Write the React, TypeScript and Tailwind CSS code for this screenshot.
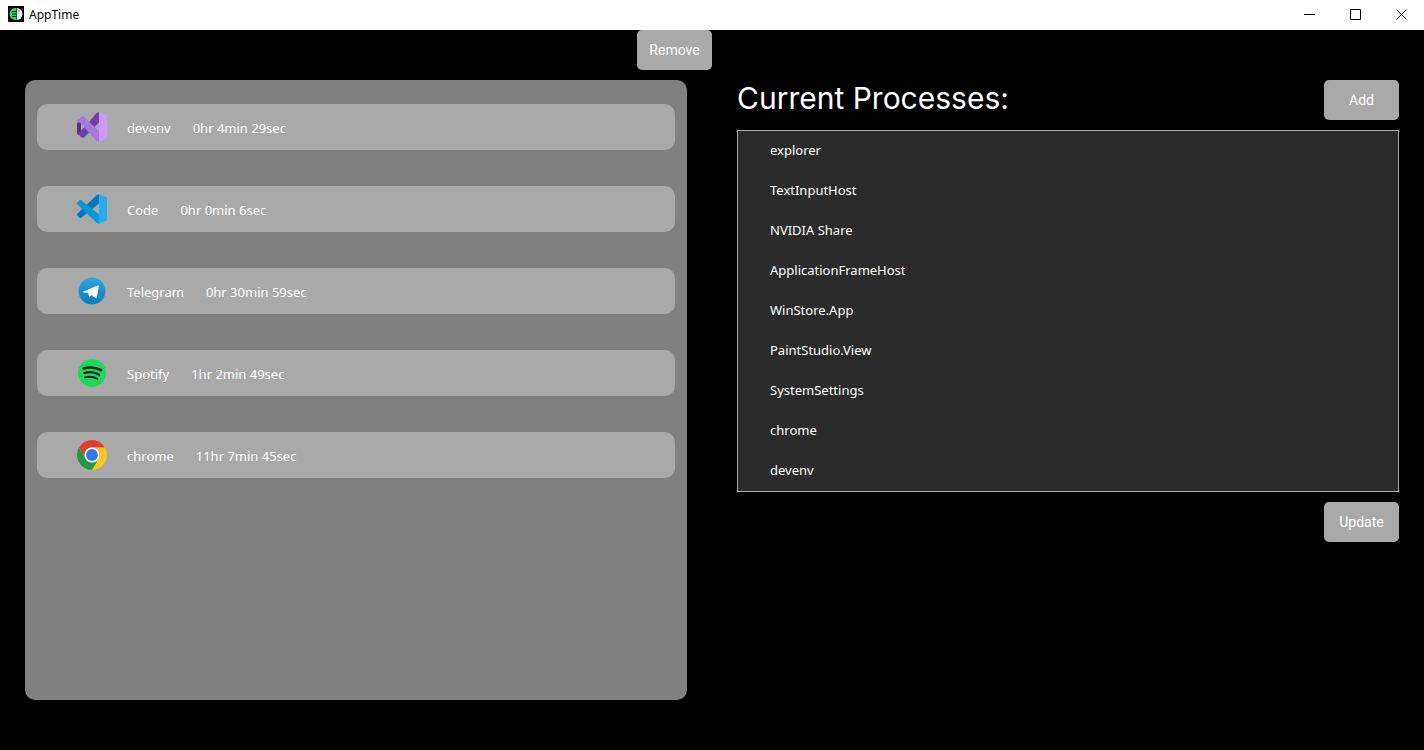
import type { ReactNode } from "react";

const textFont = "font-['Noto_Sans','Open_Sans',sans-serif]";

function AppLogo() {
  return (
    <svg className="size-4 shrink-0" viewBox="0 0 16 16" aria-hidden="true">
      <rect width="16" height="16" fill="#000" />
      <path d="M8.500 2H7a5.500 6 0 0 0 0 12h1.500z" fill="#2fd36c" />
      <path d="M9 2a5.500 6 0 0 1 0 12z" fill="#eef5f1" />
      <path d="M4 5.500h4.500M4 8h4.500M4 10.500h4.500" stroke="#03200d" strokeWidth="1.200" />
      <path d="M9 3c1.500 1 1.500 2 1 3" stroke="#789084" strokeWidth=".8" fill="none" />
    </svg>
  );
}

function VisualStudioIcon() {
  return (
    <svg className="size-8" viewBox="0 0 32 32" aria-hidden="true">
      <path d="M1 10 2 8.500 5.500 10V22l-3.200 2L1 22.500z" fill="#52318f" />
      <path d="M23 1 20.500 2 8.500 16.200 1.300 22.800 5.800 26.400c.9.600 1.700.6 2.500-.1L23 11.500z" fill="#6d44a6" />
      <path d="M1.300 9.200 5.800 5.600c.9-.6 1.700-.6 2.500.1L23 20.500V31l-2.500-1L5 12.500c-1-1-2-1-3.200-.8L1 12.500v-2.300z" fill="#a379dd" />
      <path d="M5 12.800 8 16.200 5 19.400z" fill="#a9a9a9" />
      <path d="M23 1 29.800 4.100c.8.400 1.200.9 1.200 1.700v20.400c0 .8-.4 1.300-1.200 1.700L23 31z" fill="#cf95fb" />
    </svg>
  );
}

function CodeIcon() {
  return (
    <svg className="size-8" viewBox="0 0 32 32" aria-hidden="true">
      <path d="M1.500 20.500c-.7.700-.7 1.600 0 2.300l2 1.900c.6.500 1.200.5 1.800 0L23 10.500V1.200L20.800 2z" fill="#0877b9" />
      <path d="M1.500 11.500c-.7-.7-.7-1.600 0-2.300l2-1.900c.6-.5 1.200-.5 1.800 0L23 21.500v9.300l-2.200-.8z" fill="#0798dc" />
      <path d="M23 1 29.800 4.100c.8.400 1.200.9 1.200 1.700v20.400c0 .8-.4 1.300-1.200 1.700L23 31c-.8.200-1.500 0-2.200-.8.900.8 2.200.2 2.200-1V2.800c0-1.200-1.300-1.800-2.200-1C21.500 1 22.200.8 23 1z" fill="#29a9f2" />
    </svg>
  );
}

function TelegramIcon() {
  return (
    <svg className="size-8" viewBox="0 0 32 32" aria-hidden="true">
      <defs>
        <linearGradient id="telegram" x1="0" y1="0" x2="0" y2="1">
          <stop stopColor="#2fa5df" />
          <stop offset="1" stopColor="#087dbb" />
        </linearGradient>
      </defs>
      <circle cx="16" cy="16" r="13.500" fill="url(#telegram)" />
      <path d="M7.500 16.500 21.700 10.500c.8-.3 1.300.2 1.100 1.100L20.700 22.300c-.2.900-.8 1.100-1.500.6L15.600 20l-2.300 2.400-1.200-4.600-4.500-.4c-.7-.2-.7-.6-.1-.9z" fill="#fff" />
      <path d="m13.300 22 .5-3.700 6.200-5.600-7.700 5z" fill="#cbdfe9" />
    </svg>
  );
}

function SpotifyIcon() {
  return (
    <svg className="size-8" viewBox="0 0 32 32" aria-hidden="true">
      <circle cx="16" cy="16" r="14" fill="#1ed760" />
      <g fill="none" stroke="#17251b" strokeLinecap="round">
        <path d="M7.500 11.500c6-1.700 12.600-1.100 17.500 1.700" strokeWidth="2.600" />
        <path d="M8.300 16c5.200-1.400 10.600-.8 14.900 1.800" strokeWidth="2.200" />
        <path d="M9 20.300c4.400-1 8.700-.6 12.400 1.500" strokeWidth="1.900" />
      </g>
    </svg>
  );
}

function ChromeIcon() {
  return (
    <svg className="size-8" viewBox="0 0 32 32" aria-hidden="true">
      <path d="M3.010 8.500A15 15 0 0 1 28.990 8.500H16a7.500 7.500 0 0 0-6.500 11.250z" fill="#e33b2e" />
      <path d="M28.990 8.500A15 15 0 0 1 16 31l6.500-11.250A7.500 7.500 0 0 0 16 8.500z" fill="#fdc41c" />
      <path d="M16 31A15 15 0 0 1 3.010 8.500L9.500 19.750a7.500 7.500 0 0 0 13 0z" fill="#249645" />
      <circle cx="16" cy="16" r="7.500" fill="#fff" />
      <circle cx="16" cy="16" r="5.900" fill="#2b7de9" />
    </svg>
  );
}

const tracked = [
  { name: "devenv", time: "0hr 4min 29sec", icon: <VisualStudioIcon /> },
  { name: "Code", time: "0hr 0min 6sec", icon: <CodeIcon /> },
  { name: "Telegram", time: "0hr 30min 59sec", icon: <TelegramIcon /> },
  { name: "Spotify", time: "1hr 2min 49sec", icon: <SpotifyIcon /> },
  { name: "chrome", time: "11hr 7min 45sec", icon: <ChromeIcon /> },
];

const processes = [
  "explorer",
  "TextInputHost",
  "NVIDIA Share",
  "ApplicationFrameHost",
  "WinStore.App",
  "PaintStudio.View",
  "SystemSettings",
  "chrome",
  "devenv",
];

function ActionButton({ children }: { children: ReactNode }) {
  return (
    <button
      type="button"
      className="h-10 w-[75px] shrink-0 rounded-[5px] bg-[#a9a9a9] font-[Roboto,sans-serif] text-sm text-white hover:bg-[#b8b8b8]"
    >
      {children}
    </button>
  );
}

function CaptionButton({ label, children }: { label: string; children: ReactNode }) {
  return (
    <button type="button" aria-label={label} className="flex h-7 w-[46px] items-center justify-center hover:bg-gray-200">
      <svg className="size-[11px]" viewBox="0 0 11 11" fill="none" stroke="#000" aria-hidden="true">
        {children}
      </svg>
    </button>
  );
}

export default function App() {
  return (
    <div className={`flex min-h-screen flex-col bg-black text-white ${textFont}`}>
      <header className="flex h-[30px] items-start justify-between bg-white text-black">
        <div className="flex h-7 items-center gap-[5px] pl-2">
          <AppLogo />
          <span className="pt-[2px] text-xs">AppTime</span>
        </div>
        <div className="flex">
          <CaptionButton label="Minimize">
            <path d="M0 5.500h11" />
          </CaptionButton>
          <CaptionButton label="Maximize">
            <path d="M.5.500h10v10H.5z" />
          </CaptionButton>
          <CaptionButton label="Close">
            <path d="m.5.500 10 10m0-10-10 10" />
          </CaptionButton>
        </div>
      </header>

      <main className="grid flex-1 grid-cols-2">
        <section className="flex flex-col">
          <div className="flex justify-end">
            <ActionButton>Remove</ActionButton>
          </div>
          <ul className="mx-[25px] mt-[10px] mb-[50px] flex flex-1 flex-col gap-9 rounded-[10px] bg-[#808080] px-3 py-6">
            {tracked.map((app) => (
              <li key={app.name} className="flex h-[46px] items-center rounded-[10px] bg-[#a9a9a9] pl-[39px] text-[13px]">
                {app.icon}
                <div className="ml-[19px] flex gap-[22px] pt-[3px]">
                  <span>{app.name}</span>
                  <span>{app.time}</span>
                </div>
              </li>
            ))}
          </ul>
        </section>

        <section className="flex flex-col px-[25px] pt-[50px]">
          <div className="flex h-10 items-start justify-between">
            <h1 className="font-[Inter,sans-serif] text-[30px] leading-9">Current Processes:</h1>
            <ActionButton>Add</ActionButton>
          </div>
          <ul className="mt-[10px] border border-[#a9a9a9] bg-[#2b2b2b] text-[13px]">
            {processes.map((name) => (
              <li key={name} className="flex h-10 items-center pl-8">
                {name}
              </li>
            ))}
          </ul>
          <div className="mt-[10px] flex justify-end">
            <ActionButton>Update</ActionButton>
          </div>
        </section>
      </main>
    </div>
  );
}
